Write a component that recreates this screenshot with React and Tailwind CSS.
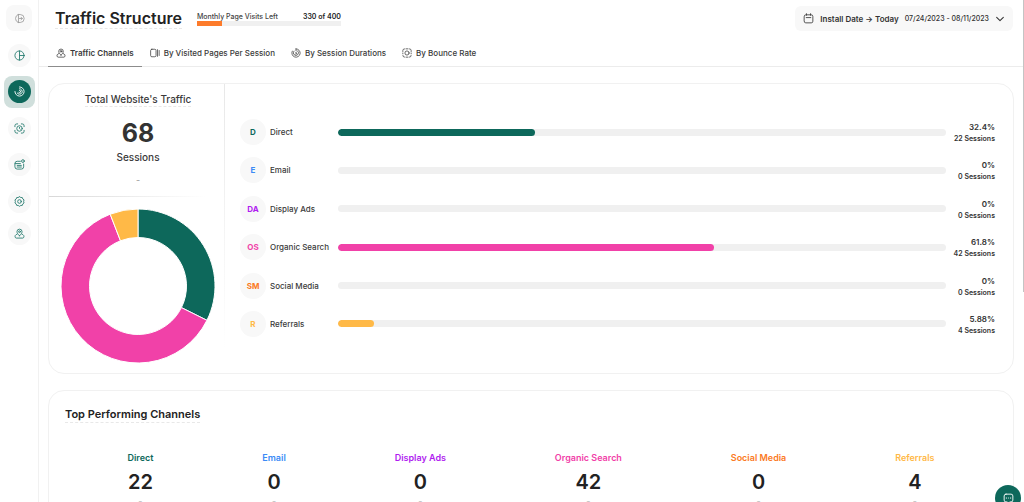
import React from "react";

const CHANNELS = [
  { code: "D", name: "Direct", share: 32.4, sessions: 22, text: "text-[#0d685b]", bar: "bg-[#0d685b]", color: "#0d685b" },
  { code: "E", name: "Email", share: 0, sessions: 0, text: "text-[#3b8bf6]", bar: "bg-[#3b8bf6]", color: "#3b8bf6" },
  { code: "DA", name: "Display Ads", share: 0, sessions: 0, text: "text-[#b01cf0]", bar: "bg-[#b01cf0]", color: "#b01cf0" },
  { code: "OS", name: "Organic Search", share: 61.8, sessions: 42, text: "text-[#f141a8]", bar: "bg-[#f141a8]", color: "#f141a8" },
  { code: "SM", name: "Social Media", share: 0, sessions: 0, text: "text-[#fb7a24]", bar: "bg-[#fb7a24]", color: "#fb7a24" },
  { code: "R", name: "Referrals", share: 5.88, sessions: 4, text: "text-[#ffb947]", bar: "bg-[#ffb947]", color: "#ffb947" },
];

function Icon({ className, children, viewBox = "0 0 24 24", width = 1.8 }) {
  return (
    <svg
      className={className}
      viewBox={viewBox}
      fill="none"
      stroke="currentColor"
      strokeWidth={width}
      strokeLinecap="round"
      strokeLinejoin="round"
      aria-hidden="true"
    >
      {children}
    </svg>
  );
}

const CollapseIcon = (p) => (
  <Icon {...p}>
    <path d="M9 3.3A9.5 9.5 0 0 0 9 20.7Z" />
    <path d="M9 3.3h4.5a8.7 8.7 0 0 1 0 17.4H9M12 12h6M15.5 9.3l2.700 2.700-2.700 2.700" />
  </Icon>
);
const PieIcon = (p) => (
  <Icon {...p}>
    <circle cx="12" cy="12" r="10" />
    <path d="M12 2v20M12 12h10" />
  </Icon>
);
const SpiralIcon = (p) => (
  <Icon {...p}>
    <path d="M12 2a10 10 0 1 1-10 10" />
    <path d="M12 6a6 6 0 1 1-5 9.300" />
    <path d="M12 9.800a2.400 2.400 0 1 1-1.500 4.200" />
  </Icon>
);
const ScanIcon = (p) => (
  <Icon {...p}>
    <path d="M2 8V6a4 4 0 0 1 4-4h2M16 2h2a4 4 0 0 1 4 4v2M22 16v2a4 4 0 0 1-4 4h-2M8 22H6a4 4 0 0 1-4-4v-2" />
    <circle cx="12" cy="12" r="6" />
    <path d="M12 9.500V12l1.500 1.500" />
  </Icon>
);
const ReportIcon = (p) => (
  <Icon {...p}>
    <path d="M14 5H7a5 5 0 0 0-5 5v7a5 5 0 0 0 5 5h9a5 5 0 0 0 5-5v-6" />
    <circle cx="19.500" cy="4.500" r="3" />
    <path d="M2.500 10H14M7 14h9M7 17.500h9" />
  </Icon>
);
const GearIcon = (p) => (
  <Icon {...p}>
    <path d="M12 1.500 14.800 3.300 18.100 3.400 19.200 6.500 21.900 8.500 21 11.800 21.900 15.200 19.200 17.300 18.100 20.500 14.800 20.600 12 22.500 9.200 20.600 5.900 20.500 4.800 17.300 2.100 15.200 3 11.800 2.100 8.500 4.800 6.500 5.900 3.400 9.200 3.300Z" />
    <circle cx="12" cy="12" r="4" />
  </Icon>
);
const PinIcon = (p) => (
  <Icon {...p}>
    <path d="M12 17c3.500-3.300 5.500-5.900 5.500-9A5.500 5.500 0 0 0 6.500 8c0 3.100 2 5.700 5.500 9Z" />
    <circle cx="12" cy="8" r="2" />
    <path d="M6.500 13.500 4.500 14.500C1 16.500 2 22 5 22h14c3 0 4-5.500.5-7.500l-2-1" />
  </Icon>
);
const PagesIcon = (p) => (
  <Icon {...p}>
    <rect x="1.500" y="3" width="13" height="18" rx="3" />
    <path d="M18 4v16M22 6v12" />
  </Icon>
);
const DurationIcon = (p) => (
  <Icon {...p}>
    <path d="M12 2a10 10 0 1 1-9 5.500" />
    <path d="M12 2v4.500M7 7.500a6.200 6.200 0 1 0 9-.5M12.500 10l-1.500 2.500h2.500L12 15" />
  </Icon>
);
const BounceIcon = (p) => (
  <Icon {...p}>
    <circle cx="12" cy="12" r="5" />
    <path d="M2 8.500V6a4 4 0 0 1 4-4M9.500 2h5M18 2a4 4 0 0 1 4 4v2.500M22 12v2M22 18a4 4 0 0 1-4 4M14.500 22h-5M6 22a4 4 0 0 1-4-4M2 14v-2" />
  </Icon>
);
const CalendarIcon = (p) => (
  <Icon {...p}>
    <path d="M2.500 7.500A3.500 3.500 0 0 1 6 4h12a3.500 3.500 0 0 1 3.500 3.500V18a3.500 3.500 0 0 1-3.500 3.500H6A3.500 3.500 0 0 1 2.500 18ZM7.500 1.500V5M16.500 1.500V5M7 10h10" />
  </Icon>
);

const NAV = [
  { label: "Overview", Glyph: PieIcon },
  { label: "Traffic structure", Glyph: SpiralIcon, active: true },
  { label: "Behavior", Glyph: ScanIcon },
  { label: "Reports", Glyph: ReportIcon },
  { label: "Settings", Glyph: GearIcon },
];

const TABS = [
  { label: "Traffic Channels", Glyph: PinIcon, active: true },
  { label: "By Visited Pages Per Session", Glyph: PagesIcon },
  { label: "By Session Durations", Glyph: DurationIcon },
  { label: "By Bounce Rate", Glyph: BounceIcon },
];

function NavLink({ label, Glyph, active }) {
  return (
    <a
      href="#"
      aria-label={label}
      className={
        active
          ? "flex h-8 w-[31px] items-center justify-center rounded-lg bg-[#d0dfdc]"
          : "flex h-8 w-[31px] items-center justify-center"
      }
    >
      <span
        className={
          active
            ? "flex size-[23px] items-center justify-center rounded-full bg-[#0d685b] text-white"
            : "flex size-[23px] items-center justify-center rounded-full bg-[#f8f8f8] text-[#2c7f73]"
        }
      >
        <Glyph className="size-[11px]" width={2} />
      </span>
    </a>
  );
}

function Sidebar() {
  return (
    <aside className="flex w-[39px] shrink-0 flex-col items-center border-r border-[#f1f1f1] pt-[5px]">
      <button type="button" aria-label="Collapse menu" className="flex size-[26px] shrink-0 items-center justify-center rounded-lg bg-[#f8f8f8] text-[#9a9a9a]">
        <CollapseIcon className="size-[11px]" />
      </button>
      <nav className="flex flex-col items-center pt-2">
        <div className="flex h-[178px] flex-col items-center justify-between">
          {NAV.map((n) => (
            <NavLink key={n.label} {...n} />
          ))}
        </div>
        <NavLink label="Visitors" Glyph={PinIcon} />
      </nav>
    </aside>
  );
}

function Header() {
  return (
    <header className="flex shrink-0 items-start justify-between pr-[11px] pl-4">
      <div className="flex items-start gap-[15px]">
        <h1 className="mt-2 border-b border-dashed border-[#e8e8e8] text-base leading-5 font-semibold text-[#222]">Traffic Structure</h1>
        <div className="mt-3 w-36">
          <div className="flex justify-between text-[7px] leading-[9px] text-[#444]">
            <span className="font-medium">Monthly Page Visits Left</span>
            <span className="font-semibold text-[#222]">330 of 400</span>
          </div>
          <div className="h-[5px] bg-[#f0f0f0]">
            <div className="h-full w-[17.5%] bg-[#fd7b2b]" />
          </div>
        </div>
      </div>
      <button type="button" className="mt-[6px] flex h-[25px] items-center rounded-md bg-[#f8f8f8] px-2 text-[#333]">
        <CalendarIcon className="mr-1.5 size-[11px]" />
        <span className="text-[8px] leading-3 font-semibold">Install Date → Today</span>
        <span className="ml-1.5 text-[7px] leading-3 font-medium">07/24/2023 - 08/11/2023</span>
        <Icon className="ml-1.5 size-2.5" width={2.5}>
          <path d="m4 8 8 8 8-8" />
        </Icon>
      </button>
    </header>
  );
}

function Tabs() {
  return (
    <nav className="mt-[9px] flex h-[27px] shrink-0 border-b border-[#ececec] pl-[9px]">
      {TABS.map(({ label, Glyph, active }) => (
        <a
          key={label}
          href="#"
          className={
            active
              ? "-mb-px flex items-center gap-1 border-b border-[#8c8c8c] px-2 text-[8px] font-semibold text-[#3a3a3a]"
              : "-mb-px flex items-center gap-1 border-b border-transparent px-2 text-[8px] font-medium text-[#3a3a3a]"
          }
        >
          <Glyph className="size-[10px] shrink-0" />
          {label}
        </a>
      ))}
    </nav>
  );
}

function Donut() {
  const total = CHANNELS.reduce((sum, c) => sum + c.sessions, 0);
  const outer = 77;
  const inner = 48.5;
  const point = (r, t) => `${(77 + r * Math.sin(t)).toFixed(2)} ${(77 - r * Math.cos(t)).toFixed(2)}`;
  let seen = 0;
  return (
    <svg viewBox="0 0 154 154" className="w-[154px]" role="img" aria-label="Sessions by channel">
      {CHANNELS.filter((c) => c.sessions > 0).map((c) => {
        const a = (seen / total) * 2 * Math.PI;
        seen += c.sessions;
        const b = (seen / total) * 2 * Math.PI;
        const large = b - a > Math.PI ? 1 : 0;
        return (
          <path
            key={c.name}
            fill={c.color}
            stroke="#fff"
            strokeWidth="1"
            d={`M${point(outer, a)}A${outer} ${outer} 0 ${large} 1 ${point(outer, b)}L${point(inner, b)}A${inner} ${inner} 0 ${large} 0 ${point(inner, a)}Z`}
          />
        );
      })}
    </svg>
  );
}

function TrafficCard() {
  return (
    <section className="flex h-[291px] shrink-0 rounded-2xl border border-[#f1f1f1] bg-white">
      <div className="w-[175px] shrink-0 pt-2">
        <div className="flex flex-col items-center pl-[3px]">
          <h2 className="border-b border-dashed border-[#e8e8e8] text-[10px] leading-[14px] font-medium text-[#3a3a3a]">Total Website's Traffic</h2>
          <p className="mt-[10px] text-[25px] leading-8 font-bold text-[#333]">68</p>
          <p className="text-[10px] leading-4 font-medium text-[#3a3a3a]">Sessions</p>
          <p className="mt-[7px] text-[9px] leading-4 text-[#999]">-</p>
        </div>
        <div className="mt-2 h-px w-full bg-linear-to-r from-[#d8d8d8] to-transparent to-90%" />
        <div className="mt-3 flex justify-center pl-[3px]">
          <Donut />
        </div>
      </div>
      <div className="mb-6 w-px bg-linear-to-b from-[#e8e8e8] to-transparent" />
      <ul className="flex flex-1 flex-col justify-between pt-[35px] pr-[18px] pb-9 pl-[15px]">
        {CHANNELS.map((c) => (
          <li key={c.name} className="flex h-[26px] items-center">
            <span className={`flex size-[26px] items-center justify-center rounded-full bg-[#f8f8f8] text-[8px] font-bold ${c.text}`}>{c.code}</span>
            <span className="w-[72px] pl-1 text-[8px] font-medium whitespace-nowrap text-[#3a3a3a]">{c.name}</span>
            <div className="h-[7px] flex-1 overflow-hidden rounded-full bg-[#f0f0f0]">
              <div className={`h-full rounded-full ${c.bar}`} style={{ width: `${c.share}%` }} />
            </div>
            <div className="w-[49px] pt-0.5 text-right font-semibold text-[#333]">
              <p className="text-[8px] leading-[11px]">{c.share}%</p>
              <p className="text-[7px] leading-[11px]">{c.sessions} Sessions</p>
            </div>
          </li>
        ))}
      </ul>
    </section>
  );
}

function TopChannels() {
  return (
    <section className="mt-4 h-[240px] shrink-0 rounded-2xl border border-[#f1f1f1] bg-white pt-4">
      <h2 className="ml-4 w-fit border-b border-dashed border-[#e8e8e8] text-[11px] leading-[15px] font-semibold text-[#222]">Top Performing Channels</h2>
      <div className="mt-[27px] flex justify-around px-6">
        {CHANNELS.map((c) => (
          <div key={c.name} className="flex flex-col items-center">
            <h3 className={`text-[9px] leading-4 font-semibold ${c.text}`}>{c.name}</h3>
            <p className="mt-0.5 text-xl leading-7 font-semibold text-[#222]">{c.sessions}</p>
            <p className="text-[9px] leading-[9px] text-[#bbb]">-</p>
          </div>
        ))}
      </div>
    </section>
  );
}

export default function App() {
  return (
    <div className="relative flex h-screen overflow-hidden bg-white font-['Inter',sans-serif]">
      <Sidebar />
      <main className="flex min-w-0 flex-1 flex-col">
        <Header />
        <Tabs />
        <div className="flex flex-col pt-4 pr-[10px] pl-[9px]">
          <TrafficCard />
          <TopChannels />
        </div>
      </main>
      <div className="absolute top-0 right-0 h-[292px] w-px bg-[#c4c4c4]" />
      <button type="button" aria-label="Open chat" className="absolute right-[3px] -bottom-[9px] flex size-[26px] items-center justify-center rounded-full bg-[#0d685b] text-white">
        <Icon className="size-[11px]" width={2}>
          <path d="M6.500 2.500h11a4 4 0 0 1 4 4v9a4 4 0 0 1-4 4h-3L12 22l-2.500-2.500h-3a4 4 0 0 1-4-4v-9a4 4 0 0 1 4-4ZM7 11h1M12 11h.1M16 11h1" />
        </Icon>
      </button>
    </div>
  );
}
